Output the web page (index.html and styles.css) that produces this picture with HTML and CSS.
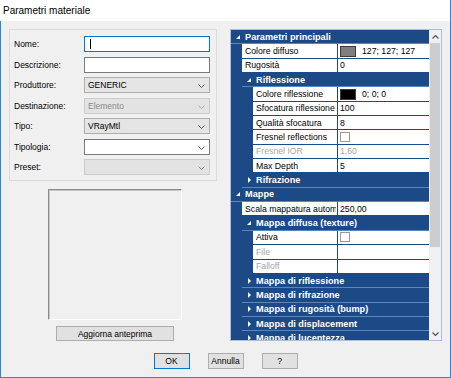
FILE: index.html
```html
<!DOCTYPE html>
<html>
<head>
<meta charset="utf-8">
<link rel="stylesheet" href="styles.css">
</head>
<body>
<div class="win">
  <div class="titlebar">Parametri materiale</div>
  <div class="client">
    <div class="main">
      <div class="leftcol">
        <div class="group">
          <div class="frow"><span class="lbl">Nome:</span><div class="field edit focus"><span class="caret"></span></div></div>
          <div class="frow"><span class="lbl">Descrizione:</span><div class="field edit"></div></div>
          <div class="frow"><span class="lbl">Produttore:</span><div class="field combo"><span class="ftext">GENERIC</span><svg class="chev" width="7" height="4" viewBox="0 0 7 4"><polyline points="0.5,0.5 3.5,3.5 6.5,0.5" fill="none" stroke="#555" stroke-width="1"/></svg></div></div>
          <div class="frow"><span class="lbl">Destinazione:</span><div class="field combo disabled"><span class="ftext">Elemento</span><svg class="chev" width="7" height="4" viewBox="0 0 7 4"><polyline points="0.5,0.5 3.5,3.5 6.5,0.5" fill="none" stroke="#aaa" stroke-width="1"/></svg></div></div>
          <div class="frow"><span class="lbl">Tipo:</span><div class="field combo"><span class="ftext">VRayMtl</span><svg class="chev" width="7" height="4" viewBox="0 0 7 4"><polyline points="0.5,0.5 3.5,3.5 6.5,0.5" fill="none" stroke="#555" stroke-width="1"/></svg></div></div>
          <div class="frow"><span class="lbl">Tipologia:</span><div class="field edit combo-edit"><span class="ftext"></span><svg class="chev" width="7" height="4" viewBox="0 0 7 4"><polyline points="0.5,0.5 3.5,3.5 6.5,0.5" fill="none" stroke="#555" stroke-width="1"/></svg></div></div>
          <div class="frow"><span class="lbl">Preset:</span><div class="field combo disabled"><span class="ftext"></span><svg class="chev" width="7" height="4" viewBox="0 0 7 4"><polyline points="0.5,0.5 3.5,3.5 6.5,0.5" fill="none" stroke="#888" stroke-width="1"/></svg></div></div>
        </div>
        <div class="previewwrap">
          <div class="preview"></div>
          <div class="btn wide">Aggiorna anteprima</div>
        </div>
      </div>
      <div class="grid">
        <div class="gridbody">
          <div class="row hdr l0"><span class="tri open"></span><span class="htext">Parametri principali</span></div>
          <div class="row prop l1"><span class="name">Colore diffuso</span><span class="val"><span class="swatch gray"></span>127; 127; 127</span></div>
          <div class="row prop l1"><span class="name">Rugosità</span><span class="val">0</span></div>
          <div class="row hdr l1"><span class="tri open"></span><span class="htext">Riflessione</span></div>
          <div class="row prop l2"><span class="name">Colore riflessione</span><span class="val"><span class="swatch black"></span>0; 0; 0</span></div>
          <div class="row prop l2"><span class="name">Sfocatura riflessione</span><span class="val">100</span></div>
          <div class="row prop l2"><span class="name">Qualità sfocatura</span><span class="val">8</span></div>
          <div class="row prop l2"><span class="name">Fresnel reflections</span><span class="val"><span class="check"></span></span></div>
          <div class="row prop l2 dis"><span class="name">Fresnel IOR</span><span class="val">1,60</span></div>
          <div class="row prop l2"><span class="name">Max Depth</span><span class="val">5</span></div>
          <div class="row hdr l1"><span class="tri closed"></span><span class="htext">Rifrazione</span></div>
          <div class="row hdr l0"><span class="tri open"></span><span class="htext">Mappe</span></div>
          <div class="row prop l1"><span class="name"><span class="clip">Scala mappatura automatica</span></span><span class="val">250,00</span></div>
          <div class="row hdr l1"><span class="tri open"></span><span class="htext">Mappa diffusa (texture)</span></div>
          <div class="row prop l2"><span class="name">Attiva</span><span class="val"><span class="check"></span></span></div>
          <div class="row prop l2 dis"><span class="name">File</span><span class="val"></span></div>
          <div class="row prop l2 dis"><span class="name">Falloff</span><span class="val"></span></div>
          <div class="row hdr l1"><span class="tri closed"></span><span class="htext">Mappa di riflessione</span></div>
          <div class="row hdr l1"><span class="tri closed"></span><span class="htext">Mappa di rifrazione</span></div>
          <div class="row hdr l1"><span class="tri closed"></span><span class="htext">Mappa di rugosità (bump)</span></div>
          <div class="row hdr l1"><span class="tri closed"></span><span class="htext">Mappa di displacement</span></div>
          <div class="row hdr l1"><span class="tri closed"></span><span class="htext">Mappa di lucentezza</span></div>
        </div>
        <div class="scrollbar">
          <div class="sarrow"><svg width="7" height="4" viewBox="0 0 7 4"><polyline points="0.5,3.5 3.5,0.5 6.5,3.5" fill="none" stroke="#555" stroke-width="1.2"/></svg></div>
          <div class="strack"><div class="thumb"></div></div>
          <div class="sarrow"><svg width="7" height="4" viewBox="0 0 7 4"><polyline points="0.5,0.5 3.5,3.5 6.5,0.5" fill="none" stroke="#555" stroke-width="1.2"/></svg></div>
        </div>
      </div>
    </div>
    <div class="buttons">
      <div class="btn small default">OK</div>
      <div class="btn small">Annulla</div>
      <div class="btn small">?</div>
    </div>
  </div>
</div>
</body>
</html>
```

FILE: styles.css
```css
* { box-sizing: border-box; }
html, body { margin: 0; padding: 0; background: #ffffff; }
body { font-family: "Liberation Sans", Arial, sans-serif; font-size: 8.5px; color: #000; }

.win {
  width: 451px;
  height: 378px;
  display: flex;
  flex-direction: column;
  border-right: 1px solid #2b88d8;
  overflow: hidden;
}

.titlebar {
  height: 21px;
  flex: 0 0 21px;
  background: #ffffff;
  font-size: 10px;
  line-height: 21px;
  padding-left: 3px;
  color: #000;
}

.client {
  flex: 1;
  background: #f0f0f0;
  border-left: 1px solid #2b88d8;
  border-bottom: 1px solid #2b88d8;
  padding: 8px 0 0 8px;
  display: flex;
  flex-direction: column;
}

.main {
  display: flex;
  height: 312px;
}

.leftcol {
  width: 208px;
  margin-right: 13px;
  display: flex;
  flex-direction: column;
}

.group {
  height: 154px;
  border: 1px solid #dcdcdc;
  padding: 6px 6px 0 4px;
  display: flex;
  flex-direction: column;
  gap: 4.5px;
}

.frow {
  display: flex;
  align-items: center;
  height: 16px;
}

.lbl {
  width: 70px;
  flex: 0 0 70px;
  color: #000;
}

.field {
  width: 127px;
  height: 16px;
  display: flex;
  align-items: center;
  position: relative;
  padding-left: 3px;
}

.edit {
  background: #ffffff;
  border: 1px solid #7a7a7a;
}

.focus { border-color: #0078d7; }

.caret {
  display: block;
  width: 1px;
  height: 10px;
  background: #000;
  margin-left: 2px;
}

.combo {
  background: #e5e5e5;
  border: 1px solid #adadad;
}

.combo.disabled {
  background: #e3e3e3;
  border-color: #cccccc;
  color: #8a8a8a;
}

.ftext { flex: 1; }

.chev {
  position: absolute;
  right: 4px;
  top: 6px;
}

.previewwrap {
  padding-left: 4px;
  display: flex;
  flex-direction: column;
  align-items: center;
}

.preview {
  margin-top: 8px;
  width: 134px;
  height: 131px;
  border-top: 1px solid #8c8c8c;
  border-left: 1px solid #8c8c8c;
  border-right: 1px solid #ffffff;
  border-bottom: 1px solid #ffffff;
  box-shadow: inset 1px 1px 0 #c8c8c8;
  background: #f0f0f0;
}

.btn {
  background: #e1e1e1;
  border: 1px solid #adadad;
  display: flex;
  align-items: center;
  justify-content: center;
  color: #000;
}

.btn.wide {
  margin-top: 6px;
  width: 118px;
  height: 15px;
}

.grid {
  width: 212px;
  height: 312px;
  border: 1px solid #a9bfd9;
  display: flex;
  background: #f0f0f0;
}

.gridbody {
  width: 198px;
  height: 100%;
  overflow: hidden;
  background: #1b4a86;
  font-size: 8.7px;
}

.row {
  height: 14.35px;
  display: flex;
  align-items: stretch;
  border-bottom: 1px solid #1b4a86;
  white-space: nowrap;
}

.hdr {
  color: #ffffff;
  font-weight: bold;
  font-size: 9.2px;
  align-items: center;
  border-bottom-color: #5b86bd;
}

.hdr.l0 { margin-left: 0; padding-left: 5px; }
.hdr.l1 { margin-left: 11px; padding-left: 5px; }

.tri { display: block; width: 9px; flex: 0 0 9px; position: relative; height: 6px; }
.tri.open::before {
  content: "";
  position: absolute;
  left: 0;
  top: 1px;
  border-style: solid;
  border-width: 0 0 4px 4px;
  border-color: transparent transparent #ffffff transparent;
}
.tri.closed::before {
  content: "";
  position: absolute;
  left: 1px;
  top: 0;
  border-style: solid;
  border-width: 3px 0 3px 3px;
  border-color: transparent transparent transparent #ffffff;
}

.prop { background: #1b4a86; }
.prop.l1 { padding-left: 11px; }
.prop.l2 { padding-left: 22px; }

.prop .name {
  background: #ffffff;
  overflow: hidden;
  padding-left: 3px;
  display: flex;
  align-items: center;
  margin-right: 1px;
}
.prop.l1 .name { width: 95px; flex: 0 0 95px; }
.prop.l2 .name { width: 84px; flex: 0 0 84px; }

.clip {
  display: block;
  width: 91px;
  overflow: hidden;
  white-space: nowrap;
}

.prop .val {
  background: #ffffff;
  flex: 1;
  padding-left: 2px;
  display: flex;
  align-items: center;
}

.prop.dis .name, .prop.dis .val { color: #a6a6a6; }

.swatch {
  display: block;
  width: 16px;
  height: 11px;
  border: 1px solid #3c3c3c;
  margin-right: 6px;
}
.swatch.gray { background: #7f7f7f; }
.swatch.black { background: #000000; }

.check {
  display: block;
  width: 10px;
  height: 10px;
  background: #ffffff;
  border: 1px solid #9a9a9a;
}

.scrollbar {
  width: 12px;
  height: 100%;
  background: #f0f0f0;
  display: flex;
  flex-direction: column;
}

.sarrow {
  height: 13px;
  flex: 0 0 13px;
  display: flex;
  align-items: center;
  justify-content: center;
}

.strack {
  flex: 1;
  padding: 0 1px;
}

.thumb {
  height: 204px;
  background: #cdcdcd;
}

.buttons {
  margin-top: 12px;
  display: flex;
  justify-content: center;
  gap: 18px;
  padding-right: 8px;
}

.btn.small {
  width: 36px;
  height: 16px;
}

.btn.default {
  border-color: #0078d7;
}
```
